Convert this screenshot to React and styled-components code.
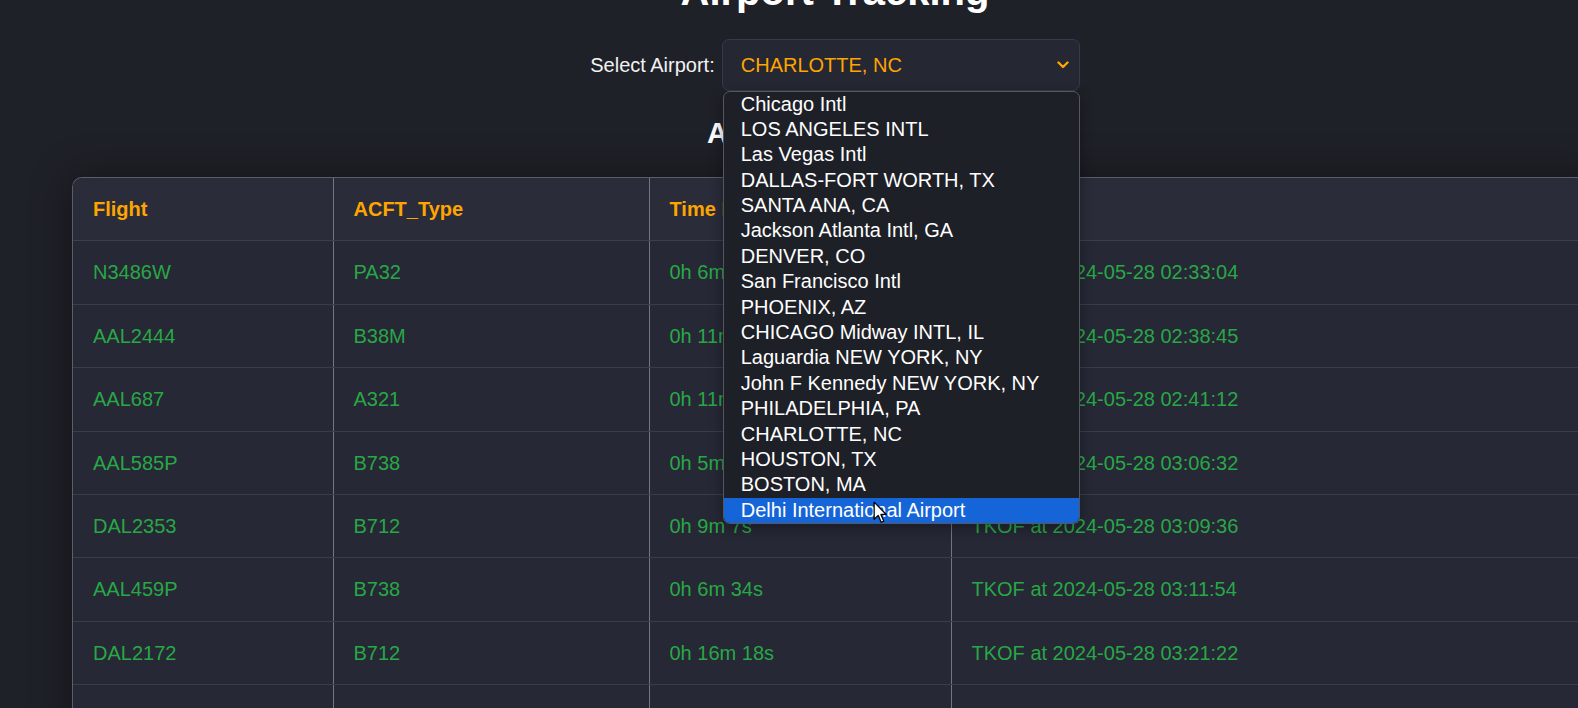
import React from "react";
import styled, { createGlobalStyle } from "styled-components";

const GlobalStyle = createGlobalStyle`
  html, body {
    margin: 0;
    padding: 0;
    background: #1f2128;
    overflow: hidden;
  }
  body {
    font-family: "Liberation Sans", Arial, sans-serif;
    color: #ffffff;
  }
`;

const Page = styled.div`
  width: 1670px;
  display: flex;
  flex-direction: column;
  align-items: center;
`;

const Title = styled.h1`
  margin: -32px 0 0;
  font-size: 40px;
  line-height: 46px;
  font-weight: 700;
  color: #ffffff;
`;

const SelectRow = styled.div`
  margin-top: 25px;
  display: flex;
  align-items: center;
  gap: 7px;
`;

const Label = styled.label`
  font-size: 20px;
  color: #f2f2f2;
`;

const SelectWrap = styled.div`
  position: relative;
  width: 358px;
`;

const SelectBox = styled.div`
  box-sizing: border-box;
  height: 52px;
  display: flex;
  align-items: center;
  justify-content: space-between;
  padding: 0 10px 0 18px;
  background: #252733;
  border: 1px solid #373945;
  border-radius: 7px;
  font-size: 20px;
  color: #ffa500;
`;

const DropList = styled.ul`
  position: absolute;
  top: 52px;
  left: 1px;
  right: 0;
  z-index: 5;
  box-sizing: border-box;
  height: 433px;
  margin: 0;
  padding: 0;
  list-style: none;
  overflow: hidden;
  background: #1e2027;
  border: 1px solid #55575f;
  border-radius: 7px;
  box-shadow: 0 4px 14px rgba(0, 0, 0, 0.35);
`;

const Option = styled.li`
  height: 25.4px;
  line-height: 25.4px;
  padding-left: 17px;
  font-size: 20px;
  white-space: nowrap;
  color: #ffffff;
  background: ${(p) => (p.$active ? "#1565d8" : "transparent")};
  &:first-child {
    margin-top: -0.5px;
  }
`;

const Heading = styled.h2`
  margin: 26px 0 27px;
  font-size: 28.8px;
  font-weight: 700;
  line-height: 33px;
  color: #ffffff;
`;

const TableCard = styled.div`
  width: 1524px;
  background: #262836;
  border: 1px solid #5c5e67;
  border-bottom: none;
  border-radius: 10px 10px 0 0;
  box-shadow: 0 0 40px rgba(0, 0, 0, 0.4);
  overflow: hidden;
`;

const Table = styled.table`
  width: 100%;
  border-collapse: collapse;
  table-layout: fixed;
  font-size: 20px;
`;

const HeadCell = styled.th`
  text-align: left;
  padding: 20px 20px;
  line-height: 22.4px;
  font-weight: 700;
  color: #ffa500;
  background: #2a2c3a;
  border-bottom: 1px solid #3d3f4b;
  border-right: 1px solid #75767d;
  &:last-child {
    border-right: none;
  }
`;

const Cell = styled.td`
  padding: 20px 20px;
  line-height: 22.4px;
  color: #28a745;
  white-space: nowrap;
  border-bottom: 1px solid #3a3c48;
  border-right: 1px solid #75767d;
  &:last-child {
    border-right: none;
  }
`;

const Cursor = styled.svg`
  position: absolute;
  left: 151px;
  top: 462px;
  z-index: 10;
  pointer-events: none;
`;

const Chevron = () => (
  <svg width="12" height="8" viewBox="0 0 12 8">
    <polyline
      points="1.5,1.5 6,6 10.5,1.5"
      fill="none"
      stroke="#ffa500"
      strokeWidth="2.4"
      strokeLinecap="round"
      strokeLinejoin="round"
    />
  </svg>
);

const options = [
  "Chicago Intl",
  "LOS ANGELES INTL",
  "Las Vegas Intl",
  "DALLAS-FORT WORTH, TX",
  "SANTA ANA, CA",
  "Jackson Atlanta Intl, GA",
  "DENVER, CO",
  "San Francisco Intl",
  "PHOENIX, AZ",
  "CHICAGO Midway INTL, IL",
  "Laguardia NEW YORK, NY",
  "John F Kennedy NEW YORK, NY",
  "PHILADELPHIA, PA",
  "CHARLOTTE, NC",
  "HOUSTON, TX",
  "BOSTON, MA",
  "Delhi International Airport",
];

const rows = [
  ["N3486W", "PA32", "0h 6m 12s", "TKOF at 2024-05-28 02:33:04"],
  ["AAL2444", "B38M", "0h 11m 41s", "TKOF at 2024-05-28 02:38:45"],
  ["AAL687", "A321", "0h 11m 3s", "TKOF at 2024-05-28 02:41:12"],
  ["AAL585P", "B738", "0h 5m 22s", "TKOF at 2024-05-28 03:06:32"],
  ["DAL2353", "B712", "0h 9m 7s", "TKOF at 2024-05-28 03:09:36"],
  ["AAL459P", "B738", "0h 6m 34s", "TKOF at 2024-05-28 03:11:54"],
  ["DAL2172", "B712", "0h 16m 18s", "TKOF at 2024-05-28 03:21:22"],
  ["DAL2191", "B712", "0h 18m 24s", "TKOF at 2024-05-28 03:24:10"],
];

export default function App() {
  return (
    <>
      <GlobalStyle />
      <Page>
        <Title>Airport Tracking</Title>
        <SelectRow>
          <Label>Select Airport:</Label>
          <SelectWrap>
            <SelectBox>
              <span>CHARLOTTE, NC</span>
              <Chevron />
            </SelectBox>
            <DropList>
              {options.map((o, i) => (
                <Option key={o} $active={i === options.length - 1}>
                  {o}
                </Option>
              ))}
            </DropList>
            <Cursor width="16" height="24" viewBox="0 0 14 21">
              <path
                d="M1 1 L1 16 L4.6 12.6 L7.2 18.6 L9.4 17.6 L6.9 11.8 L11.6 11.8 Z"
                fill="#ffffff"
                stroke="#000000"
                strokeWidth="1.1"
                strokeLinejoin="round"
              />
            </Cursor>
          </SelectWrap>
        </SelectRow>
        <Heading>Airport Departures</Heading>
        <TableCard>
          <Table>
            <colgroup>
              <col style={{ width: 260 }} />
              <col style={{ width: 316 }} />
              <col style={{ width: 302 }} />
              <col />
            </colgroup>
            <thead>
              <tr>
                <HeadCell>Flight</HeadCell>
                <HeadCell>ACFT_Type</HeadCell>
                <HeadCell>Time Elapsed</HeadCell>
                <HeadCell>Status</HeadCell>
              </tr>
            </thead>
            <tbody>
              {rows.map((r) => (
                <tr key={r[0]}>
                  {r.map((c, j) => (
                    <Cell key={j}>{c}</Cell>
                  ))}
                </tr>
              ))}
            </tbody>
          </Table>
        </TableCard>
      </Page>
    </>
  );
}
